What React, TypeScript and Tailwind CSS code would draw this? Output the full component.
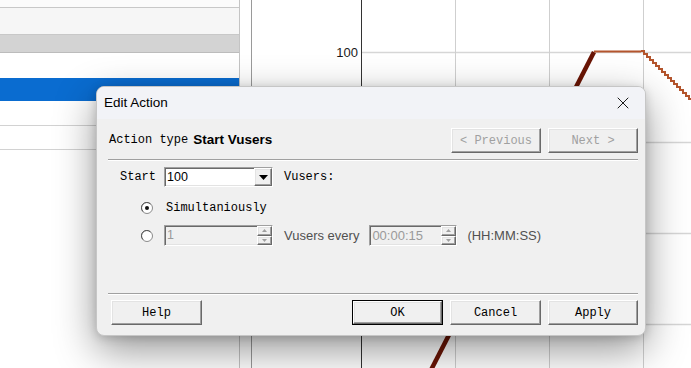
import { X } from "lucide-react";

const mono = { fontFamily: '"Liberation Mono", "DejaVu Sans Mono", monospace' };
const sans = { fontFamily: '"Liberation Sans", Arial, sans-serif' };

const raised =
  "border border-t-white border-l-white border-b-[#696969] border-r-[#696969] shadow-[inset_-1px_-1px_0_#a0a0a0,inset_1px_1px_0_#e3e3e3] bg-[#f0f0f0]";
const sunken =
  "border border-t-[#a0a0a0] border-l-[#a0a0a0] border-b-white border-r-white shadow-[inset_1px_1px_0_#696969,inset_-1px_-1px_0_#e3e3e3]";

function ClassicButton({ label, disabled, isDefault, w = "w-[91px]" }: { label: string; disabled?: boolean; isDefault?: boolean; w?: string }) {
  const inner = (
    <div
      className={`${raised} h-full w-full flex items-center justify-center pt-[1px] text-[12px] ${disabled ? "text-[#a0a0a0]" : "text-black"}`}
      style={mono}
    >
      {label}
    </div>
  );
  return (
    <div className={`${w} h-[25px] ${isDefault ? "border border-black" : ""}`}>{inner}</div>
  );
}

function Radio({ checked }: { checked?: boolean }) {
  return (
    <svg width="12" height="12" viewBox="0 0 12 12">
      <circle cx="6" cy="6" r="5.5" fill="#ffffff" stroke="#8a8a8a" />
      <path d="M2 9.5 A5 5 0 0 1 9.5 2" fill="none" stroke="#555" strokeWidth="1" />
      {checked && <circle cx="6" cy="6" r="2" fill="#111" />}
    </svg>
  );
}

function SpinArrows() {
  return (
    <div className="w-[15px] h-full flex flex-col">
      <div className={`${raised} flex-1 flex items-center justify-center`}>
        <svg width="5" height="3" viewBox="0 0 5 3"><path d="M0 3 L2.5 0 L5 3 Z" fill="#a0a0a0" /></svg>
      </div>
      <div className={`${raised} flex-1 flex items-center justify-center`}>
        <svg width="5" height="3" viewBox="0 0 5 3"><path d="M0 0 L2.5 3 L5 0 Z" fill="#a0a0a0" /></svg>
      </div>
    </div>
  );
}

function Chart() {
  const stairs: string[] = [];
  let x = 389;
  let y = 51;
  while (x < 440) {
    stairs.push(`${x},${y}`);
    x += 3;
    stairs.push(`${x},${y}`);
    y += 3;
    stairs.push(`${x},${y}`);
  }
  return (
    <svg width="439" height="368" viewBox="0 0 439 368" className="block">
      {[52, 142, 233, 324].map((gy) => (
        <line key={gy} x1="109" y1={gy + 0.5} x2="439" y2={gy + 0.5} stroke="#d6d6d6" strokeWidth="1.5" />
      ))}
      {[203, 297, 391].map((gx) => (
        <line key={gx} x1={gx + 0.5} y1="0" x2={gx + 0.5} y2="368" stroke="#cfcfcf" />
      ))}
      <line x1="109.5" y1="0" x2="109.5" y2="368" stroke="#333" />
      <text x="106" y="57" textAnchor="end" fontSize="13" fill="#1a1a1a" style={sans}>100</text>
      <line x1="179" y1="370" x2="342" y2="52" stroke="#6a1505" strokeWidth="4.5" />
      <line x1="342" y1="51.5" x2="389" y2="51.5" stroke="#b4552d" strokeWidth="2" />
      <polyline points={stairs.join(" ")} fill="none" stroke="#b4552d" strokeWidth="2" />
    </svg>
  );
}

export default function App() {
  return (
    <div className="relative w-[691px] h-[368px] overflow-hidden bg-white flex">
      {/* left list panel */}
      <div className="w-[240px] h-full border-r border-[#c4c4c4] flex flex-col">
        <div className="h-[8px] bg-[#fbfbfb] border-b border-[#c8c8c8]" />
        <div className="h-[27px] bg-[#f6f6f6] border-b border-[#c8c8c8]" />
        <div className="h-[18px] bg-[#d3d3d3] border-b border-[#bcbcbc]" />
        <div className="h-[25px] bg-white" />
        <div className="h-[23px] bg-[#0a6cd0]" />
        <div className="h-[25px] bg-white border-b border-[#d2d2d2]" />
        <div className="h-[24px] bg-white border-b border-[#d2d2d2]" />
        <div className="flex-1 bg-white" />
      </div>
      <div className="w-[12px] h-full bg-white border-r border-[#9a9a9a]" />
      <div className="flex-1 h-full">
        <Chart />
      </div>

      {/* Edit Action dialog */}
      <div className="absolute left-[96px] top-[86px] w-[550px] h-[250px] rounded-[8px] overflow-hidden bg-[#f0f0f0] border border-[#c6c6c6] shadow-[0_14px_40px_rgba(0,0,0,0.42),0_2px_10px_rgba(0,0,0,0.16)] flex flex-col">
        <div className="h-[32px] bg-[#f2f3f7] flex items-center justify-between pl-[7px] pr-[12px]">
          <span className="text-[13.5px] text-black" style={sans}>Edit Action</span>
          <X size={20} strokeWidth={1.2} color="#1a1a1a" />
        </div>
        <div className="flex flex-col pl-[11px] pr-[7px] pt-[9px] pb-[8px] flex-1">
          <div className="h-[24px] flex items-center justify-between">
            <div className="flex items-center ml-[1px]">
              <span className="text-[12px] text-black" style={mono}>Action type</span>
              <span className="ml-[5px] text-[13.5px] font-bold text-black" style={sans}>Start Vusers</span>
            </div>
            <div className="flex gap-[7px]">
              <ClassicButton label="<  Previous" disabled w="w-[90px]" />
              <ClassicButton label="Next  >" disabled w="w-[90px]" />
            </div>
          </div>
          <div className="mt-[7px] h-[2px] border-t border-[#a0a0a0] border-b border-b-white" />

          <div className="mt-[6px] h-[20px] flex items-center">
            <span className="ml-[12px] w-[44px] text-[12px] text-black" style={mono}>Start</span>
            <div className={`${sunken} bg-white w-[109px] h-[20px] flex items-center`}>
              <span className="flex-1 pl-[2px] text-[12.5px] text-black" style={sans}>100</span>
              <div className={`${raised} w-[18px] h-full flex items-center justify-center`}>
                <svg width="9" height="5" viewBox="0 0 9 5"><path d="M0 0 L9 0 L4.5 5 Z" fill="#000" /></svg>
              </div>
            </div>
            <span className="ml-[11px] text-[12px] text-black" style={mono}>Vusers:</span>
          </div>

          <div className="mt-[13px] h-[16px] flex items-center">
            <div className="ml-[33px]"><Radio checked /></div>
            <span className="ml-[13px] text-[12px] text-black" style={mono}>Simultaniously</span>
          </div>

          <div className="mt-[9px] h-[21px] flex items-center">
            <div className="ml-[33px]"><Radio /></div>
            <div className={`${sunken} ml-[11px] w-[109px] h-[21px] flex items-center bg-[#f0f0f0]`}>
              <span className="flex-1 pl-[2px] text-[12.5px] text-[#9a9a9a]" style={sans}>1</span>
              <SpinArrows />
            </div>
            <span className="ml-[11px] text-[13px] text-[#505050]" style={sans}>Vusers every</span>
            <div className={`${sunken} ml-[10px] w-[88px] h-[21px] flex items-center bg-[#f0f0f0]`}>
              <span className="flex-1 pl-[2px] text-[13px] text-[#9a9a9a]" style={sans}>00:00:15</span>
              <SpinArrows />
            </div>
            <span className="ml-[10px] text-[13px] text-[#505050]" style={sans}>(HH:MM:SS)</span>
          </div>

          <div className="mt-[47px] h-[2px] border-t border-[#a0a0a0] border-b border-b-white" />

          <div className="mt-[5px] flex items-center justify-between">
            <div className="ml-[3px]"><ClassicButton label="Help" /></div>
            <div className="flex gap-[7px]">
              <ClassicButton label="OK" isDefault />
              <ClassicButton label="Cancel" />
              <ClassicButton label="Apply" w="w-[90px]" />
            </div>
          </div>
        </div>
      </div>
    </div>
  );
}
